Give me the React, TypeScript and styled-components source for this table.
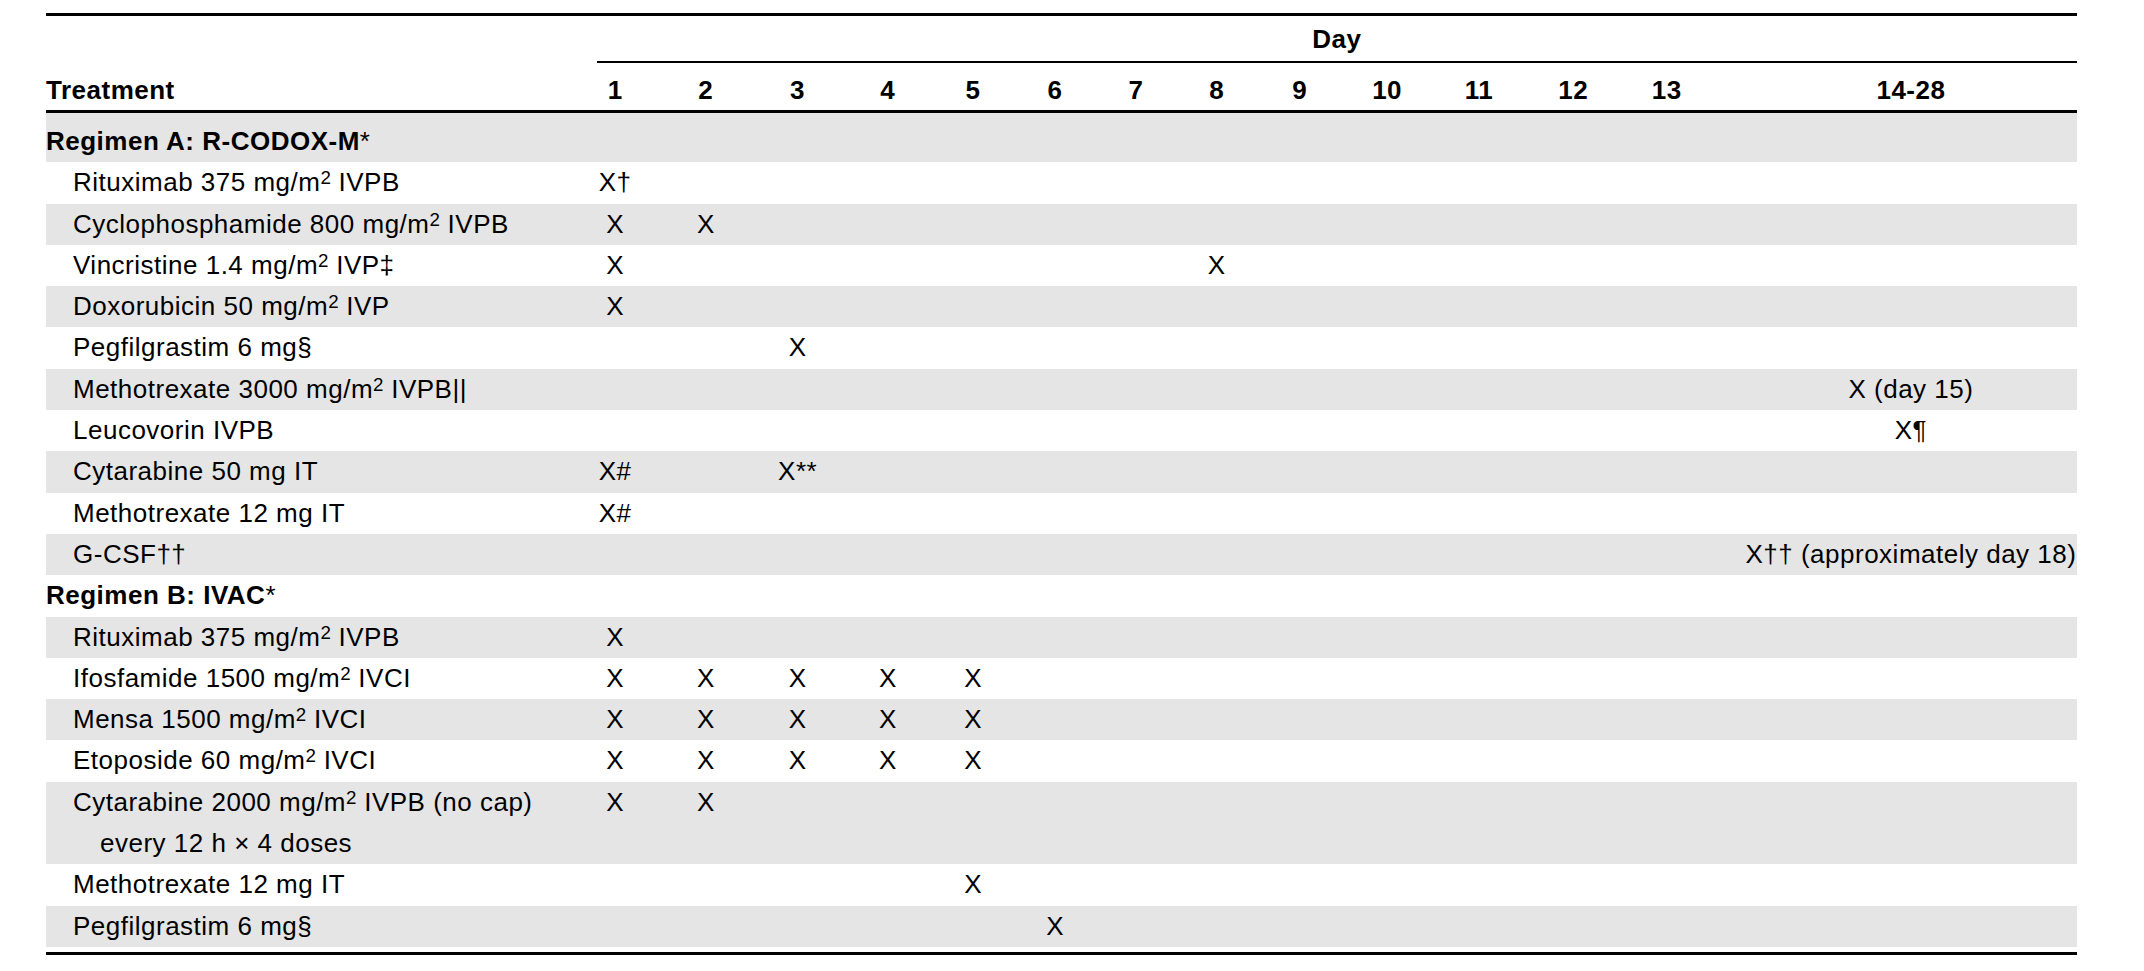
import React from 'react';
import styled, { createGlobalStyle } from 'styled-components';

const GlobalStyle = createGlobalStyle`
  html, body {
    margin: 0;
    padding: 0;
    background: #ffffff;
  }

  body {
    font-family: 'Liberation Sans', Arial, Helvetica, sans-serif;
    color: #000000;
  }
`;

// label column + 13 day columns + a spacer + the wide 14-28 column
const COLUMNS =
  '524px 90.35px 91px 92.5px 88px 82.5px 81.5px 80.5px 80.65px 85.3px 89.7px 93.85px 95px 91.7px 32.75px 331.4px';

const Page = styled.div`
  padding: 13px 0 0 46px;
`;

const Table = styled.div`
  width: 2030.7px;
  border-top: 3px solid #000;
  border-bottom: 3px solid #000;
  padding-bottom: 5px;
  font-size: 26px;
  letter-spacing: 0.5px;
`;

const GridRow = styled.div`
  display: grid;
  grid-template-columns: ${COLUMNS};
`;

const DayRow = styled(GridRow)`
  height: 47px;
`;

const DaySpan = styled.div`
  grid-column: 2 / -1;
  margin-left: 27px;
  border-bottom: 2px solid #000;
  padding-top: 2px;
  line-height: 43px;
  text-align: center;
  font-weight: bold;
`;

const HeaderRow = styled(GridRow)`
  height: 50px;
  border-bottom: 3px solid #000;
  padding-top: 6.5px;
  box-sizing: border-box;
  line-height: 41.3px;
  font-weight: bold;
`;

const Body = styled.div``;

const BodyRow = styled(GridRow)<{ $shaded: boolean }>`
  background: ${(p) => (p.$shaded ? '#e5e5e5' : 'transparent')};
  line-height: 41.3px;
  align-items: start;

  &:first-child {
    padding-top: 8px;
  }
`;

const Label = styled.div<{ $level: number }>`
  padding-left: ${(p) => p.$level * 27}px;
  font-weight: ${(p) => (p.$level === 0 ? 'bold' : 'normal')};
  white-space: nowrap;
`;

const LabelLine = styled.div<{ $indent?: boolean }>`
  padding-left: ${(p) => (p.$indent ? 27 : 0)}px;
`;

const DayCell = styled.div`
  text-align: center;
  white-space: nowrap;

  &:last-child {
    grid-column: 16;
  }
`;

const Sup = styled.span`
  font-size: 0.72em;
  vertical-align: 0.38em;
  line-height: 0;
  letter-spacing: 0;
`;

const Star = styled.span`
  font-weight: normal;
`;

const M2 = () => (
  <>
    mg/m<Sup>2</Sup>
  </>
);

type Entry = {
  label: React.ReactNode;
  more?: React.ReactNode;
  level: number;
  days?: Record<number, string>;
};

const five = { 1: 'X', 2: 'X', 3: 'X', 4: 'X', 5: 'X' };

const rows: Entry[] = [
  { level: 0, label: <>Regimen A: R-CODOX-M<Star>*</Star></> },
  { level: 1, label: <>Rituximab 375 <M2 /> IVPB</>, days: { 1: 'X†' } },
  { level: 1, label: <>Cyclophosphamide 800 <M2 /> IVPB</>, days: { 1: 'X', 2: 'X' } },
  { level: 1, label: <>Vincristine 1.4 <M2 /> IVP‡</>, days: { 1: 'X', 8: 'X' } },
  { level: 1, label: <>Doxorubicin 50 <M2 /> IVP</>, days: { 1: 'X' } },
  { level: 1, label: 'Pegfilgrastim 6 mg§', days: { 3: 'X' } },
  { level: 1, label: <>Methotrexate 3000 <M2 /> IVPB||</>, days: { 14: 'X (day 15)' } },
  { level: 1, label: 'Leucovorin IVPB', days: { 14: 'X¶' } },
  { level: 1, label: 'Cytarabine 50 mg IT', days: { 1: 'X#', 3: 'X**' } },
  { level: 1, label: 'Methotrexate 12 mg IT', days: { 1: 'X#' } },
  { level: 1, label: 'G-CSF††', days: { 14: 'X†† (approximately day 18)' } },
  { level: 0, label: <>Regimen B: IVAC<Star>*</Star></> },
  { level: 1, label: <>Rituximab 375 <M2 /> IVPB</>, days: { 1: 'X' } },
  { level: 1, label: <>Ifosfamide 1500 <M2 /> IVCI</>, days: five },
  { level: 1, label: <>Mensa 1500 <M2 /> IVCI</>, days: five },
  { level: 1, label: <>Etoposide 60 <M2 /> IVCI</>, days: five },
  {
    level: 1,
    label: <>Cytarabine 2000 <M2 /> IVPB (no cap)</>,
    more: 'every 12 h × 4 doses',
    days: { 1: 'X', 2: 'X' },
  },
  { level: 1, label: 'Methotrexate 12 mg IT', days: { 5: 'X' } },
  { level: 1, label: 'Pegfilgrastim 6 mg§', days: { 6: 'X' } },
];

const dayHeads = ['1', '2', '3', '4', '5', '6', '7', '8', '9', '10', '11', '12', '13', '14-28'];

const App = () => (
  <Page>
    <GlobalStyle />
    <Table>
      <DayRow>
        <DaySpan>Day</DaySpan>
      </DayRow>
      <HeaderRow>
        <div>Treatment</div>
        {dayHeads.map((d) => (
          <DayCell key={d}>{d}</DayCell>
        ))}
      </HeaderRow>
      <Body>
        {rows.map((row, i) => (
          <BodyRow key={i} $shaded={i % 2 === 0}>
            <Label $level={row.level}>
              <LabelLine>{row.label}</LabelLine>
              {row.more && <LabelLine $indent>{row.more}</LabelLine>}
            </Label>
            {dayHeads.map((_, k) => (
              <DayCell key={k}>{row.days?.[k + 1] ?? ''}</DayCell>
            ))}
          </BodyRow>
        ))}
      </Body>
    </Table>
  </Page>
);

export default App;
